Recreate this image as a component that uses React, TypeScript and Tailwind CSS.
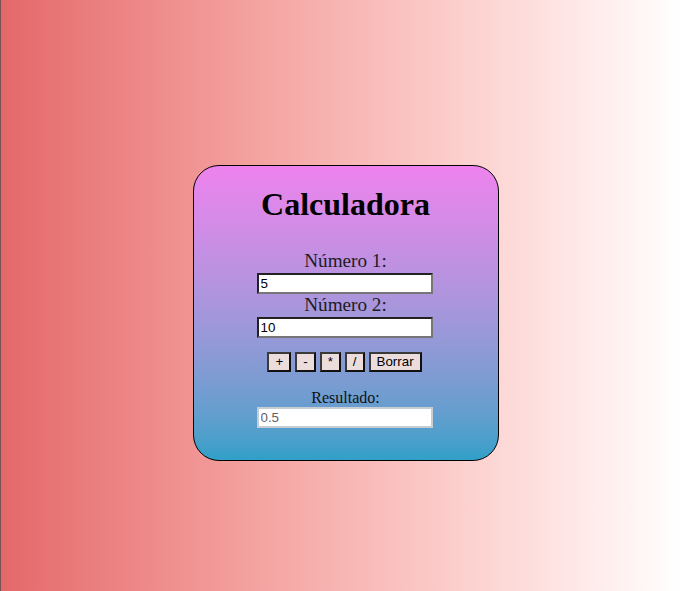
import { useState } from 'react';

const serif = "font-['Liberation_Serif','Times_New_Roman',serif]";
const sans = "font-['Liberation_Sans',Arial,sans-serif]";

export default function App() {
  const [a, setA] = useState('5');
  const [b, setB] = useState('10');
  const [res, setRes] = useState('0.5');

  const calc = (op: string) => {
    const x = parseFloat(a);
    const y = parseFloat(b);
    if (op === '+') setRes(String(x + y));
    if (op === '-') setRes(String(x - y));
    if (op === '*') setRes(String(x * y));
    if (op === '/') setRes(String(x / y));
  };

  const borrar = () => {
    setA('');
    setB('');
    setRes('');
  };

  const inputCls = `${sans} block w-[176px] h-[21px] px-[2px] py-[1px] text-[13.33px] leading-[15px] text-black bg-white border-2 border-t-[#222] border-l-[#222] border-b-[#767676] border-r-[#767676] outline-none`;
  const btnCls = `${sans} h-[20px] px-[6px] text-[13.33px] leading-[14px] text-black bg-[#ecdcdc] border-2 border-t-[#3a3a3a] border-l-[#3a3a3a] border-b-[#111] border-r-[#111]`;

  return (
    <div className="h-[591px] w-full overflow-hidden border-l border-[#7a5252] bg-gradient-to-r from-[#e4686a] to-white">
      <div className="flex justify-center pl-[8px] pt-[165px]">
        <div className={`${serif} flex w-[306px] h-[296px] flex-col items-center rounded-[26px] border border-black bg-gradient-to-b from-[#ee82ee] to-[#30a0c8]`}>
          <h1 className="mt-[20px] text-[32px] leading-[37px] font-bold text-black">Calculadora</h1>

          <label className="mt-[27px] text-[19.2px] leading-[22px] text-[#1c1c24]">Número 1:</label>
          <input className={`${inputCls} mt-[1px] -ml-[2px]`} value={a} onChange={e => setA(e.target.value)} />

          <label className="text-[19.2px] leading-[22px] text-[#1c1c24]">Número 2:</label>
          <input className={`${inputCls} mt-[1px] -ml-[2px]`} value={b} onChange={e => setB(e.target.value)} />

          <div className="mt-[14px] flex gap-[4px] -ml-[2px]">
            <button className={btnCls} onClick={() => calc('+')}>+</button>
            <button className={btnCls} onClick={() => calc('-')}>-</button>
            <button className={btnCls} onClick={() => calc('*')}>*</button>
            <button className={btnCls} onClick={() => calc('/')}>/</button>
            <button className={btnCls} onClick={borrar}>Borrar</button>
          </div>

          <label className="mt-[17px] text-[16px] leading-[18px] text-[#111]">Resultado:</label>
          <input
            readOnly
            className={`${sans} -ml-[2px] block w-[176px] h-[21px] px-[2px] py-[1px] text-[13.33px] leading-[15px] text-[#5f5f5f] bg-white border-2 border-[#c6cdd3] outline-none`}
            value={res}
          />
        </div>
      </div>
    </div>
  );
}
